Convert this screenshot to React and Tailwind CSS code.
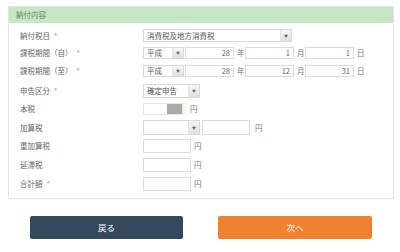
import React from "react";

const font = { fontFamily: '"Noto Sans CJK JP", "Noto Sans", sans-serif' };

function Sel({ w, text }) {
  return (
    <div className={`flex h-full ${w} border border-[#d9d9d9] bg-white`}>
      <div className="flex-1 flex items-center pl-[3px] text-[7.5px] text-[#555] leading-none">{text}</div>
      <div className="w-[11px] h-full bg-gradient-to-b from-[#f6f6f6] to-[#e0e0e0] border-l border-[#e6e6e6] flex items-center justify-center">
        <span className="text-[4px] text-[#666] leading-none">▼</span>
      </div>
    </div>
  );
}

function Inp({ w, text }) {
  return (
    <div className={`h-full ${w} border border-[#dcdcdc] bg-white flex items-center justify-end pr-[3px] text-[7.5px] text-[#666] leading-none`}>
      {text}
    </div>
  );
}

function Unit({ t, cls = "" }) {
  return <span className={`text-[7.5px] text-[#777] leading-none ${cls}`}>{t}</span>;
}

function Row({ cls, label, req, children }) {
  return (
    <div className={`flex items-center ${cls}`}>
      <div className="w-[134px] pl-[11px] text-[7.5px] text-[#666] leading-none">
        {label}
        {req && <span className="text-[#e0706a] ml-[4px]">*</span>}
      </div>
      <div className="flex items-center h-full">{children}</div>
    </div>
  );
}

export default function App() {
  return (
    <div className="w-[400px] h-[252px] bg-white overflow-hidden" style={font}>
      <div className="ml-[8px] mt-[6px] w-[386px] h-[193px] border border-[#e3e3e3] flex flex-col">
        <div className="h-[16px] bg-[#c7e6c4] flex items-center pl-[7px] text-[7.5px] text-[#5f8c5c] leading-none">納付内容</div>
        <Row cls="mt-[6px] h-[13px]" label="納付税目" req>
          <Sel w="w-[149px]" text="消費税及地方消費税" />
        </Row>
        <Row cls="mt-[5px] h-[12px]" label="課税期間（自）" req>
          <Sel w="w-[41px]" text="平成" />
          <div className="w-[1px]" />
          <Inp w="w-[49px]" text="28" />
          <Unit t="年" cls="w-[11px] pl-[3px]" />
          <Inp w="w-[49px]" text="1" />
          <Unit t="月" cls="w-[11px] pl-[3px]" />
          <Inp w="w-[49px]" text="1" />
          <Unit t="日" cls="pl-[3px]" />
        </Row>
        <Row cls="mt-[6px] h-[12px]" label="課税期間（至）" req>
          <Sel w="w-[41px]" text="平成" />
          <div className="w-[1px]" />
          <Inp w="w-[49px]" text="28" />
          <Unit t="年" cls="w-[11px] pl-[3px]" />
          <Inp w="w-[49px]" text="12" />
          <Unit t="月" cls="w-[11px] pl-[3px]" />
          <Inp w="w-[49px]" text="31" />
          <Unit t="日" cls="pl-[3px]" />
        </Row>
        <Row cls="mt-[7px] h-[14px]" label="申告区分" req>
          <Sel w="w-[57px]" text="確定申告" />
        </Row>
        <Row cls="mt-[5px] h-[12px]" label="本税">
          <div className="h-full w-[40px] border border-[#e4e4e4] bg-white flex justify-end">
            <div className="w-[15px] h-full bg-[#aaaaaa]" />
          </div>
          <div className="h-full w-[4px] bg-[#fbf8ea]" />
          <Unit t="円" cls="pl-[3px]" />
        </Row>
        <Row cls="mt-[5px] h-[15px]" label="加算税">
          <Sel w="w-[57px]" text="" />
          <div className="w-[2px]" />
          <Inp w="w-[48px]" text="" />
          <Unit t="円" cls="pl-[5px]" />
        </Row>
        <Row cls="mt-[4px] h-[14px]" label="重加算税">
          <Inp w="w-[48px]" text="" />
          <Unit t="円" cls="pl-[3px]" />
        </Row>
        <Row cls="mt-[5px] h-[14px]" label="延滞税">
          <Inp w="w-[48px]" text="" />
          <Unit t="円" cls="pl-[3px]" />
        </Row>
        <Row cls="mt-[5px] h-[14px]" label="合計額" req>
          <Inp w="w-[48px]" text="" />
          <Unit t="円" cls="pl-[3px]" />
        </Row>
      </div>
      <div className="flex mt-[17px] pl-[30px] gap-[35px]">
        <div className="w-[153px] h-[23px] bg-[#34495e] rounded-[2px] flex items-center justify-center text-[8.5px] text-white leading-none">戻る</div>
        <div className="w-[154px] h-[23px] bg-[#f0822f] rounded-[2px] flex items-center justify-center text-[8.5px] text-white leading-none">次へ</div>
      </div>
    </div>
  );
}
